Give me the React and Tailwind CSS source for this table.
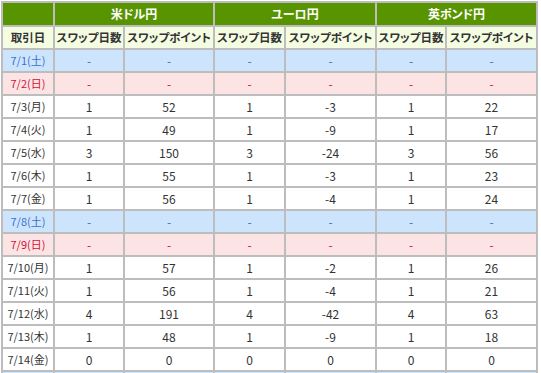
import React from "react";

const rows = [
  ["7/1(土)", "sat"],
  ["7/2(日)", "sun"],
  ["7/3(月)", ["1", "52", "1", "-3", "1", "22"]],
  ["7/4(火)", ["1", "49", "1", "-9", "1", "17"]],
  ["7/5(水)", ["3", "150", "3", "-24", "3", "56"]],
  ["7/6(木)", ["1", "55", "1", "-3", "1", "23"]],
  ["7/7(金)", ["1", "56", "1", "-4", "1", "24"]],
  ["7/8(土)", "sat"],
  ["7/9(日)", "sun"],
  ["7/10(月)", ["1", "57", "1", "-2", "1", "26"]],
  ["7/11(火)", ["1", "56", "1", "-4", "1", "21"]],
  ["7/12(水)", ["4", "191", "4", "-42", "4", "63"]],
  ["7/13(木)", ["1", "48", "1", "-9", "1", "18"]],
  ["7/14(金)", ["0", "0", "0", "0", "0", "0"]],
  ["", "sat"],
];

const font = { fontFamily: '"Noto Sans CJK JP", "Noto Sans", sans-serif' };

function Cell({ children, cls }) {
  return (
    <div className={"flex items-center justify-center leading-none whitespace-nowrap [font-feature-settings:'palt'] " + cls}>
      {children}
    </div>
  );
}

export default function App() {
  return (
    <div className="h-[373px] w-[541px] overflow-hidden bg-white" style={font}>
      <div className="ml-px mt-px w-[537px] bg-[#bdbdbd] p-[2px] grid gap-[2px] grid-cols-[50px_68px_88px_69px_89px_68px_89px] grid-rows-[22px] auto-rows-[21px]">
        <Cell cls="bg-[#589400]" />
        <Cell cls="col-span-2 bg-[#589400] text-white font-bold text-[12px]">米ドル円</Cell>
        <Cell cls="col-span-2 bg-[#589400] text-white font-bold text-[12px]">ユーロ円</Cell>
        <Cell cls="col-span-2 bg-[#589400] text-white font-bold text-[12px]">英ポンド円</Cell>
        <Cell cls="bg-[#f4fde2] text-[#333] font-bold text-[11.5px]">取引日</Cell>
        {["スワップ日数", "スワップポイント", "スワップ日数", "スワップポイント", "スワップ日数", "スワップポイント"].map((t, i) => (
          <Cell key={i} cls="bg-[#f4fde2] text-[#333] font-bold text-[11.5px]">{t}</Cell>
        ))}
        {rows.map(([d, v], ri) => {
          if (v === "sat" || v === "sun") {
            const c = v === "sat" ? "bg-[#cde5fc] text-[#3a6fd0]" : "bg-[#fde4e4] text-[#d0103a]";
            return (
              <React.Fragment key={ri}>
                <Cell cls={c + " text-[11px]"}>{d}</Cell>
                {[0, 1, 2, 3, 4, 5].map((i) => (
                  <Cell key={i} cls={c + " text-[12px]"}>{d ? "-" : ""}</Cell>
                ))}
              </React.Fragment>
            );
          }
          return (
            <React.Fragment key={ri}>
              <Cell cls="bg-white text-[#333] text-[11px]">{d}</Cell>
              {v.map((x, i) => (
                <Cell key={i} cls="bg-white text-[#333] text-[12px]">{x}</Cell>
              ))}
            </React.Fragment>
          );
        })}
      </div>
    </div>
  );
}
